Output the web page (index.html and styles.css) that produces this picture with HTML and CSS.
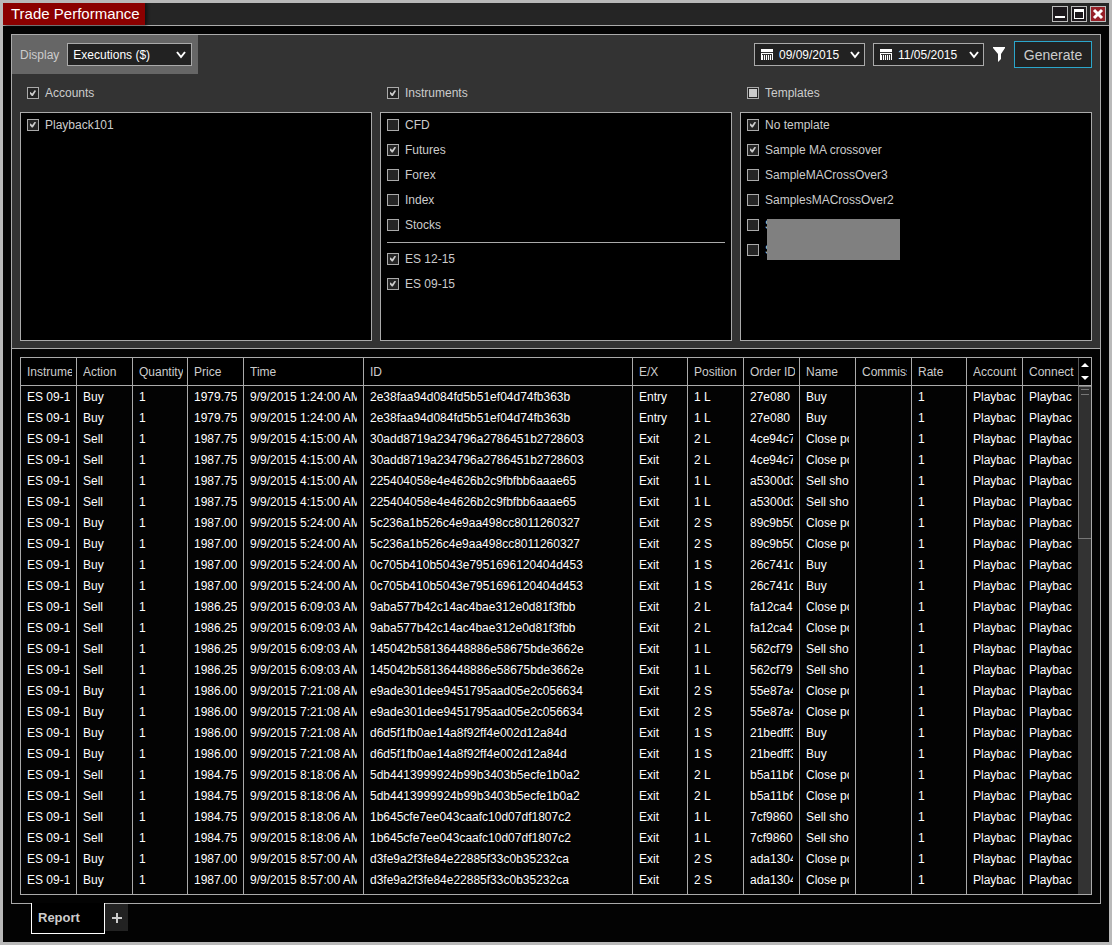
FILE: index.html
```html
<!DOCTYPE html>
<html lang="en">
<head>
  <meta charset="UTF-8">
  <meta name="viewport" content="width=device-width, initial-scale=1.0">
  <title>Trade Performance</title>
  <link rel="stylesheet" href="styles.css">
</head>
<body>
  <header class="titlebar">
    <h1>Trade Performance</h1>
    <div class="window-buttons">
      <button aria-label="Minimize"><svg viewBox="0 0 14 14"><path d="M2 9h10v2H2z"/></svg></button>
      <button aria-label="Maximize"><svg viewBox="0 0 14 14"><path d="M2 2h10v10H2zM3 5v6h8V5z" fill-rule="evenodd"/></svg></button>
      <button class="close" aria-label="Close"><svg viewBox="0 0 14 14"><path d="M3 3l8 8M11 3l-8 8" stroke="#fff" stroke-width="3"/></svg></button>
    </div>
  </header>

  <main class="panel">
    <section class="filters">
      <div class="toolbar">
        <div class="display">
          <label for="display">Display</label>
          <div class="picker">
            <select id="display"><option>Executions ($)</option></select>
            <svg class="chevron" viewBox="0 0 10 8"><path d="M1 1l4 5 4-5"/></svg>
          </div>
        </div>
        <div class="actions">
          <button class="date">
            <svg class="calendar" viewBox="0 0 12 11"><path d="M0 0h12v11H0z" fill="#fff"/><path d="M0 3h12v1H0zM1 5h10v1H1zM2 6h1v5H2zM4 6h1v5H4zM6 6h1v5H6zM8 6h1v5H8zM10 6h1v5h-1z" fill="#333"/></svg>
            09/09/2015
            <svg class="chevron" viewBox="0 0 10 8"><path d="M1 1l4 5 4-5"/></svg>
          </button>
          <button class="date">
            <svg class="calendar" viewBox="0 0 12 11"><path d="M0 0h12v11H0z" fill="#fff"/><path d="M0 3h12v1H0zM1 5h10v1H1zM2 6h1v5H2zM4 6h1v5H4zM6 6h1v5H6zM8 6h1v5H8zM10 6h1v5h-1z" fill="#333"/></svg>
            11/05/2015
            <svg class="chevron" viewBox="0 0 10 8"><path d="M1 1l4 5 4-5"/></svg>
          </button>
          <button class="funnel" aria-label="Filter"><svg viewBox="0 0 12 15"><path d="M0 0h12v1L8 7v5l-3 3V7L0 1z"/></svg></button>
          <button class="generate">Generate</button>
        </div>
      </div>

      <div class="groups">
        <div class="group">
          <label class="check all"><input type="checkbox" checked>Accounts</label>
          <div class="list">
            <label class="check"><input type="checkbox" checked>Playback101</label>
          </div>
        </div>
        <div class="group">
          <label class="check all"><input type="checkbox" checked>Instruments</label>
          <div class="list">
            <label class="check"><input type="checkbox">CFD</label>
            <label class="check"><input type="checkbox" checked>Futures</label>
            <label class="check"><input type="checkbox">Forex</label>
            <label class="check"><input type="checkbox">Index</label>
            <label class="check"><input type="checkbox">Stocks</label>
            <hr>
            <label class="check"><input type="checkbox" checked>ES 12-15</label>
            <label class="check"><input type="checkbox" checked>ES 09-15</label>
          </div>
        </div>
        <div class="group">
          <label class="check all"><input type="checkbox" class="mixed">Templates</label>
          <div class="list">
            <label class="check"><input type="checkbox" checked>No template</label>
            <label class="check"><input type="checkbox" checked>Sample MA crossover</label>
            <label class="check"><input type="checkbox">SampleMACrossOver3</label>
            <label class="check"><input type="checkbox">SamplesMACrossOver2</label>
            <div class="hidden-names">
              <label class="check"><input type="checkbox">S</label>
              <label class="check"><input type="checkbox">S</label>
              <div class="cover"></div>
            </div>
          </div>
        </div>
      </div>
    </section>

    <section class="report">
      <div class="grid">
        <table>
          <colgroup>
            <col class="c56"><col class="c56"><col class="c55"><col class="c56"><col class="c120"><col>
            <col class="c55"><col class="c56"><col class="c56"><col class="c56"><col class="c56"><col class="c55"><col class="c56"><col class="c56">
          </colgroup>
          <thead><tr id="head"></tr></thead>
          <tbody id="rows"></tbody>
        </table>
        <div class="scrollbar">
          <div class="arrows">
            <svg viewBox="0 0 8 17"><path d="M0 4l4-4 4 4zM0 13h8l-4 4z"/></svg>
          </div>
          <div class="track"><div class="thumb"></div></div>
        </div>
      </div>
    </section>
  </main>

  <nav class="tabs">
    <button class="tab">Report</button>
    <button class="add" aria-label="Add tab"><svg viewBox="0 0 10 10"><path d="M4 0h2v4h4v2H6v4H4V6H0V4h4z"/></svg></button>
  </nav>

  <script>
    const columns = ['Instrument', 'Action', 'Quantity', 'Price', 'Time', 'ID', 'E/X', 'Position', 'Order ID', 'Name', 'Commission', 'Rate', 'Account', 'Connection'];

    // action, price, time, id, entry/exit, position, order id, name
    const executions = [
      ['Buy', '1979.75', '1:24:00', '2e38faa94d084fd5b51ef04d74fb363b', 'Entry', '1 L', '27e080', 'Buy'],
      ['Sell', '1987.75', '4:15:00', '30add8719a234796a2786451b2728603', 'Exit', '2 L', '4ce94c7', 'Close position'],
      ['Sell', '1987.75', '4:15:00', '225404058e4e4626b2c9fbfbb6aaae65', 'Exit', '1 L', 'a5300d3', 'Sell short'],
      ['Buy', '1987.00', '5:24:00', '5c236a1b526c4e9aa498cc8011260327', 'Exit', '2 S', '89c9b50', 'Close position'],
      ['Buy', '1987.00', '5:24:00', '0c705b410b5043e7951696120404d453', 'Exit', '1 S', '26c741c', 'Buy'],
      ['Sell', '1986.25', '6:09:03', '9aba577b42c14ac4bae312e0d81f3fbb', 'Exit', '2 L', 'fa12ca4', 'Close position'],
      ['Sell', '1986.25', '6:09:03', '145042b58136448886e58675bde3662e', 'Exit', '1 L', '562cf79', 'Sell short'],
      ['Buy', '1986.00', '7:21:08', 'e9ade301dee9451795aad05e2c056634', 'Exit', '2 S', '55e87a4', 'Close position'],
      ['Buy', '1986.00', '7:21:08', 'd6d5f1fb0ae14a8f92ff4e002d12a84d', 'Exit', '1 S', '21bedff3', 'Buy'],
      ['Sell', '1984.75', '8:18:06', '5db4413999924b99b3403b5ecfe1b0a2', 'Exit', '2 L', 'b5a11b6', 'Close position'],
      ['Sell', '1984.75', '8:18:06', '1b645cfe7ee043caafc10d07df1807c2', 'Exit', '1 L', '7cf9860', 'Sell short'],
      ['Buy', '1987.00', '8:57:00', 'd3fe9a2f3fe84e22885f33c0b35232ca', 'Exit', '2 S', 'ada1304', 'Close position']
    ];

    const head = document.getElementById('head');
    const rows = document.getElementById('rows');

    head.innerHTML = columns.map(c => `<th><div>${c}</div></th>`).join('');

    // every execution is listed twice
    executions.forEach(([action, price, time, id, ex, position, order, name]) => {
      const cells = ['ES 09-15', action, '1', price, `9/9/2015 ${time} AM`, id, ex, position, order, name, '', '1', 'Playback101', 'Playback'];
      const row = `<tr>${cells.map(c => `<td><div>${c}</div></td>`).join('')}</tr>`;
      rows.insertAdjacentHTML('beforeend', row + row);
    });
  </script>
</body>
</html>
```
FILE: styles.css
```css
* {
  box-sizing: border-box;
}
body {
  margin: 0;
  min-height: 100vh;
  border: 3px solid #b9b9b9;
  background: #030303;
  color: #ccc;
  font-family: "Liberation Sans", Arial, sans-serif;
  font-size: 12px;
  line-height: 16px;
}
button, select {
  font: inherit;
  color: inherit;
  padding: 0;
  border: 0;
  background: none;
}
svg {
  display: block;
  fill: #fff;
}

/* title bar */
.titlebar {
  display: flex;
  justify-content: space-between;
  background: #252525;
  border-bottom: 1px solid #aaa;
}
h1 {
  margin: 0;
  padding: 0 5px 0 8px;
  background: #8b0000;
  color: #fff;
  font-size: 15px;
  font-weight: normal;
  line-height: 22px;
  box-shadow: 2px 0 3px #111;
}
.window-buttons {
  display: flex;
  gap: 3px;
  padding: 3px 3px 0 0;
}
.window-buttons button {
  width: 16px;
  height: 16px;
  border: 1px solid #bbb;
  background: #1c181c;
}
.window-buttons .close {
  background: #962028;
}

/* main panel */
.panel {
  margin: 8px 8px 0;
  border: 1px solid #aaa;
}
.filters {
  background: #333;
  border-bottom: 1px solid #aaa;
  padding-bottom: 7px;
}
.toolbar {
  display: flex;
  justify-content: space-between;
}
.display {
  display: flex;
  align-items: center;
  gap: 8px;
  height: 39px;
  padding: 0 6px 0 8px;
  background: #666;
}
.picker {
  position: relative;
}
.picker select {
  appearance: none;
  display: block;
  width: 125px;
  height: 23px;
  padding: 0 5px;
  border: 1px solid #aaa;
  background: #222;
  color: #fff;
}
.chevron {
  width: 10px;
  height: 8px;
  fill: none;
  stroke: #fff;
  stroke-width: 2;
}
.picker .chevron {
  position: absolute;
  right: 6px;
  top: 8px;
  pointer-events: none;
}
.actions {
  display: flex;
  align-items: center;
  gap: 8px;
  padding-right: 8px;
}
.date {
  display: flex;
  align-items: center;
  gap: 6px;
  width: 111px;
  height: 23px;
  padding: 0 4px 0 6px;
  border: 1px solid #aaa;
  background: #222;
  color: #fff;
}
.date .chevron {
  margin-left: auto;
}
.calendar {
  width: 12px;
  height: 11px;
}
.funnel svg {
  width: 14px;
  height: 15px;
}
.generate {
  width: 78px;
  height: 27px;
  border: 1px solid #2ba6cb;
  background: #222;
  font-size: 14px;
}

/* filter lists */
.groups {
  display: grid;
  grid-template-columns: repeat(3, 1fr);
  gap: 8px;
  padding: 7px 8px 0;
}
.check {
  display: flex;
  align-items: center;
  gap: 6px;
  height: 25px;
  padding-bottom: 2px;
}
.check.all {
  height: 31px;
  padding: 0 0 7px 7px;
}
.check input {
  appearance: none;
  display: grid;
  place-content: center;
  width: 12px;
  height: 12px;
  margin: 0;
  border: 1px solid #aaa;
  background: #252525;
}
.check input:checked::before {
  content: "";
  width: 6px;
  height: 6px;
  background: #ccc;
  clip-path: polygon(0 30%, 38% 58%, 80% 0, 100% 15%, 48% 100%, 30% 100%, 0 65%);
}
.check .mixed::before {
  content: "";
  width: 8px;
  height: 8px;
  background: #ccc;
}
.list {
  height: 229px;
  padding: 0 6px;
  border: 1px solid #aaa;
  background: #000;
}
hr {
  height: 1px;
  margin: 4px 0;
  border: 0;
  background: #aaa;
}
.hidden-names {
  position: relative;
}
/* grey block laid over the private template names */
.cover {
  position: absolute;
  left: 20px;
  top: 6px;
  width: 133px;
  height: 41px;
  background: #808080;
}

/* report grid */
.report {
  padding: 8px;
}
.grid {
  display: flex;
  border: 1px solid #aaa;
}
table {
  flex: 1;
  width: 0;
  table-layout: fixed;
  border-collapse: separate;
  border-spacing: 0;
}
.c55 {
  width: 55px;
}
.c56 {
  width: 56px;
}
.c120 {
  width: 120px;
}
th, td {
  height: 21px;
  padding: 0 6px;
  border-right: 1px solid #aaa;
  white-space: nowrap;
  text-align: left;
  color: #fff;
}
th {
  height: 28px;
  padding-right: 4px;
  border-bottom: 1px solid #aaa;
  background: #000;
  color: #ccc;
  font-weight: normal;
}
th div, td div {
  overflow: hidden;
}
th:last-child {
  border-right-color: #555;
}
td:last-child {
  border-right-color: #333;
}
tbody tr:last-child td {
  height: 25px;
  padding-bottom: 4px;
}
.scrollbar {
  display: flex;
  flex-direction: column;
  width: 12px;
}
.arrows {
  display: grid;
  place-content: center;
  height: 28px;
  border-bottom: 1px solid #aaa;
  background: #000;
}
.arrows svg {
  width: 8px;
  height: 17px;
}
.track {
  flex: 1;
  background: #333;
}
.thumb {
  height: 153px;
  margin-left: -1px;
  padding: 2px;
  border: 1px solid #777;
  border-right: 0;
  background: #303030;
}
.thumb::before {
  content: "";
  display: block;
  height: 4px;
  border: 1px solid #777;
  border-width: 1px 0;
}

/* tabs */
.tabs {
  display: flex;
  align-items: flex-start;
  padding: 0 28px 8px;
}
.tab {
  position: relative;
  width: 74px;
  height: 31px;
  margin-top: -1px;
  padding-left: 6px;
  border: 1px solid #fff;
  border-top: 0;
  background: #000;
  font-size: 13px;
  font-weight: bold;
  text-align: left;
}
.add {
  display: grid;
  place-content: center;
  width: 23px;
  height: 27px;
  background: #222;
}
.add svg {
  width: 10px;
  height: 10px;
  fill: #ccc;
}
```
